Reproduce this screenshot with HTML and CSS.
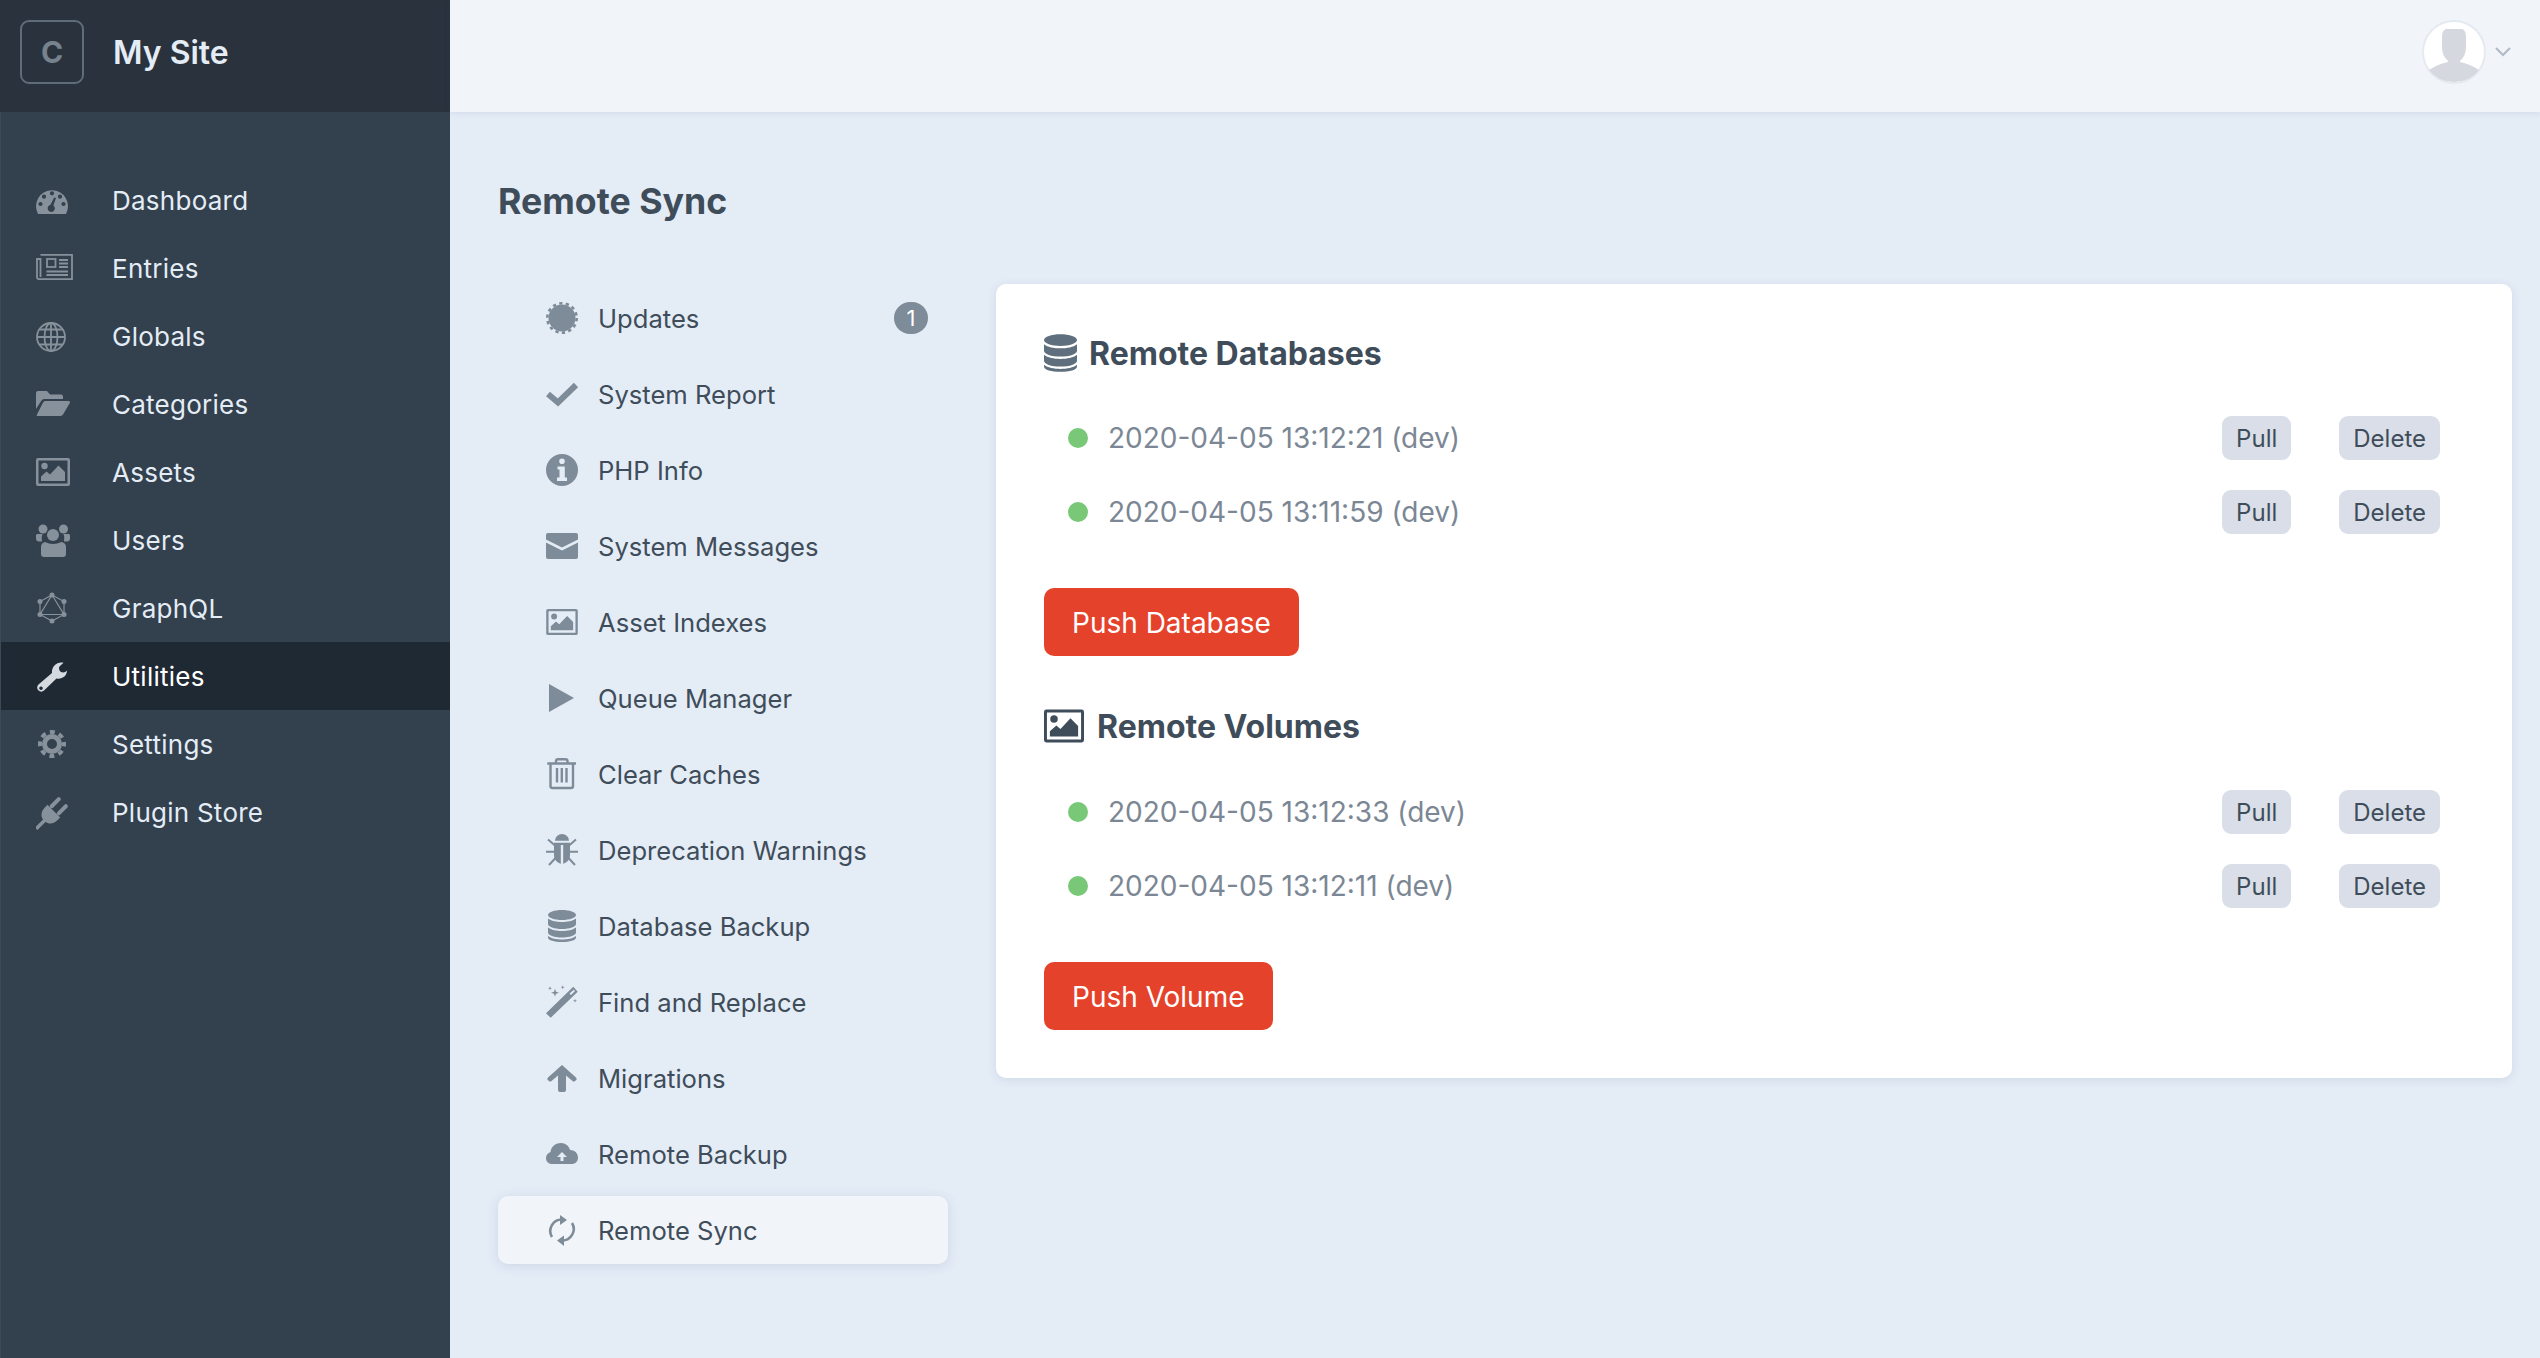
FILE: index.html
```html
<!DOCTYPE html>
<html lang="en">
<head>
  <meta charset="UTF-8" />
  <title>Remote Sync - My Site</title>
  <link rel="stylesheet" href="styles.css">
</head>
<body>
  <svg class="defs" width="0" height="0">
    <symbol id="i-db" viewBox="0 0 28 32">
      <path d="M14 0C21.700 0 28 2.200 28 5S21.700 10 14 10 0 7.800 0 5 6.300 0 14 0Z"/>
      <path d="M0 8.500C3 11 8.500 12 14 12S25 11 28 8.500V14C28 16.800 21.700 19 14 19S0 16.800 0 14Z"/>
      <path d="M0 17.500C3 20 8.500 21 14 21S25 20 28 17.500V22.500C28 25.300 21.700 27.500 14 27.500S0 25.300 0 22.500Z"/>
      <path d="M0 26C3 28.500 8.500 29.500 14 29.500S25 28.500 28 26V27.500C28 30.300 21.700 32 14 32S0 30.300 0 27.500Z"/>
    </symbol>
    <symbol id="i-pic" viewBox="0 0 34 28">
      <path fill-rule="evenodd" d="M2 0H32A2 2 0 0 1 34 2V26A2 2 0 0 1 32 28H2A2 2 0 0 1 0 26V2A2 2 0 0 1 2 0ZM2.500 2.500V25.500H31.500V2.500Z"/>
      <circle cx="8.500" cy="8" r="3.200"/>
      <path d="M5 23V18.500L10.500 13.500 14 16.500 22.500 7.500 29 14V23Z"/>
    </symbol>
  </svg>

  <div class="sidebar">
    <div class="site">
      <div class="site-logo">C</div>
      <div class="site-name">My Site</div>
    </div>
    <ul class="nav">
      <li class="nav-item">
        <svg class="nav-ico" viewBox="0 0 40 40"><path fill-rule="evenodd" d="M2 34A16 16 0 1 1 30 34ZM16 11.200A2.100 2.100 0 1 0 16 15.400 2.100 2.100 0 0 0 16 11.200ZM8 14.600A2.100 2.100 0 1 0 8 18.800 2.100 2.100 0 0 0 8 14.600ZM24 14.600A2.100 2.100 0 1 0 24 18.800 2.100 2.100 0 0 0 24 14.600ZM4.500 21.900A2.100 2.100 0 1 0 4.500 26.100 2.100 2.100 0 0 0 4.500 21.900ZM27.500 21.900A2.100 2.100 0 1 0 27.500 26.100 2.100 2.100 0 0 0 27.500 21.900ZM18.200 17.500L14.500 24.800A3.600 3.600 0 1 0 17.400 25.400L20 18Z"/></svg>
        <span>Dashboard</span>
      </li>
      <li class="nav-item">
        <svg class="nav-ico" viewBox="0 0 40 40"><g class="line" stroke-width="1.800"><path d="M4.500 6.900H36V31.100H3Q1 31.100 1 29V11H4.500V29"/><rect x="11" y="11" width="8.500" height="8"/><path d="M23 12H32M23 15.500H32M23 19H32M10.500 23.500H32M10.500 27H32"/></g></svg>
        <span>Entries</span>
      </li>
      <li class="nav-item">
        <svg class="nav-ico" viewBox="0 0 40 40"><g class="line" stroke-width="1.800"><circle cx="15" cy="21" r="14"/><ellipse cx="15" cy="21" rx="6.500" ry="14"/><path d="M15 7V35M1 21H29M3.500 13.500H26.500M3.500 28.500H26.500"/></g></svg>
        <span>Globals</span>
      </li>
      <li class="nav-item">
        <svg class="nav-ico" viewBox="0 0 40 40"><path d="M0 9Q0 7 2 7H11L14 10.500H25Q27 10.500 27 12.500V15H8Q6.500 15 5.500 16.500L0 25Z"/><path d="M9 17H32Q35 17 33.800 19L27 30.500Q26 32 24 32H2Q0 32 1 30.500L7 18.500Q8 17 9 17Z"/></svg>
        <span>Categories</span>
      </li>
      <li class="nav-item">
        <svg class="nav-ico" viewBox="0 0 40 40"><use href="#i-pic" x="0" y="6" width="34" height="28"/></svg>
        <span>Assets</span>
      </li>
      <li class="nav-item">
        <svg class="nav-ico" viewBox="0 0 40 40"><circle cx="17" cy="15" r="6"/><circle cx="7" cy="9" r="4.500"/><circle cx="27.500" cy="9" r="4.500"/><path d="M1 14H6.500Q5 17 6 21.500H3Q0 21.500 0 18V15Z"/><path d="M33 14H27.500Q29 17 28 21.500H31Q34 21.500 34 18V15Z"/><path d="M9 22Q13 24 17 24T25.500 22Q30 23 30 27V34Q30 37 27 37H8Q5 37 5 34V27Q5 23 9 22Z"/></svg>
        <span>Users</span>
      </li>
      <li class="nav-item">
        <svg class="nav-ico" viewBox="0 0 40 40"><g class="line" stroke-width="1.200"><path d="M16 7L28 13.500V26.500L16 33 4 26.500V13.500ZM16 7L28 26.500H4Z"/></g><circle cx="16" cy="7" r="2.500"/><circle cx="28" cy="13.500" r="2.500"/><circle cx="28" cy="26.500" r="2.500"/><circle cx="16" cy="33" r="2.500"/><circle cx="4" cy="26.500" r="2.500"/><circle cx="4" cy="13.500" r="2.500"/></svg>
        <span>GraphQL</span>
      </li>
      <li class="nav-item active">
        <svg class="nav-ico" viewBox="0 0 40 40"><path fill-rule="evenodd" d="M27.500 6.800C21 5.500 15.500 10.500 16 17L2.500 28.500C.5 30.500 1 33 2.500 34.500 4 36 6.500 36 8 34.500L20.500 22.500C26 23.500 31 20 31 14.500 29.500 16.500 27 17 25 16 22.500 14.500 22.500 10.500 24.500 9.500ZM5 30.500A1.800 1.800 0 1 0 5 34.100 1.800 1.800 0 0 0 5 30.500Z"/></svg>
        <span>Utilities</span>
      </li>
      <li class="nav-item">
        <svg class="nav-ico" viewBox="0 0 40 40"><g class="line"><circle cx="16" cy="20" r="7.500" stroke-width="5"/><circle cx="16" cy="20" r="12" stroke-width="4" stroke-dasharray="5 4.420" stroke-dashoffset="2.500"/></g></svg>
        <span>Settings</span>
      </li>
      <li class="nav-item">
        <svg class="nav-ico" viewBox="0 0 40 40"><g transform="translate(15 22) rotate(45)"><path d="M-9 -4H9V0C9 6 5 9 1.800 9.500V21H-1.800V9.500C-5 9 -9 6 -9 0Z"/><rect x="-7" y="-18" width="4" height="14" rx="2"/><rect x="3" y="-18" width="4" height="14" rx="2"/></g></svg>
        <span>Plugin Store</span>
      </li>
    </ul>
  </div>

  <div class="main">
    <div class="topbar">
      <svg class="avatar" viewBox="0 0 64 64">
        <circle cx="32" cy="32" r="31" fill="#fff" stroke="#e5eaf1" stroke-width="2"/>
        <path fill="#d5d8de" d="M24 9H40Q44 10 44 17V27Q44 36 38 41L38 42Q48 44 57 50 48 62 32 62T7 50Q16 44 26 42L26 41Q20 36 20 27V17Q20 10 24 9Z"/>
      </svg>
      <svg class="chevron" viewBox="0 0 16 10"><path d="M1 1L8 8 15 1"/></svg>
    </div>

    <div class="content">
      <h1 class="page-title">Remote Sync</h1>
      <div class="columns">
        <ul class="subnav">
          <li class="sub-item">
            <svg class="sub-ico" viewBox="0 0 40 40"><circle cx="16" cy="20" r="13.500"/><g class="line"><circle cx="16" cy="20" r="14.700" stroke-width="2.600" stroke-dasharray="3.300 3.300"/></g></svg>
            <span>Updates</span>
            <span class="badge">1</span>
          </li>
          <li class="sub-item">
            <svg class="sub-ico" viewBox="0 0 40 40"><g class="line" stroke-width="6"><path d="M2 20L12 28.500 30 11"/></g></svg>
            <span>System Report</span>
          </li>
          <li class="sub-item">
            <svg class="sub-ico" viewBox="0 0 40 40"><path fill-rule="evenodd" d="M16 4A16 16 0 1 1 16 36 16 16 0 0 1 16 4ZM16 8.500A2.800 2.800 0 1 0 16 14.100 2.800 2.800 0 0 0 16 8.500ZM11.500 16.500V19.500H13.500V27.500H11V31H21V27.500H18.800V16.500Z"/></svg>
            <span>PHP Info</span>
          </li>
          <li class="sub-item">
            <svg class="sub-ico" viewBox="0 0 40 40"><path d="M2 7H30Q32 7 32 9V13.500L16 21.500 0 13.500V9Q0 7 2 7Z"/><path d="M0 16.500L16 24.500 32 16.500V31Q32 33 30 33H2Q0 33 0 31Z"/></svg>
            <span>System Messages</span>
          </li>
          <li class="sub-item">
            <svg class="sub-ico" viewBox="0 0 40 40"><use href="#i-pic" x="0" y="7" width="32" height="26"/></svg>
            <span>Asset Indexes</span>
          </li>
          <li class="sub-item">
            <svg class="sub-ico" viewBox="0 0 40 40"><path d="M3 6L28 20 3 34Z"/></svg>
            <span>Queue Manager</span>
          </li>
          <li class="sub-item">
            <svg class="sub-ico" viewBox="0 0 40 40"><g class="line" stroke-width="2.400"><path d="M1.300 9.500H30M4.500 9.500V32Q4.500 34 6.500 34H25Q27 34 27 32V9.500M10 9.500V7Q10 5.200 12 5.200H19.500Q21.500 5.200 21.500 7V9.500M11 14V28.500M15.800 14V28.500M20.500 14V28.500"/></g></svg>
            <span>Clear Caches</span>
          </li>
          <li class="sub-item">
            <svg class="sub-ico" viewBox="0 0 40 40"><path d="M9 10.700A7 6.700 0 0 1 23 10.700Z"/><path fill-rule="evenodd" d="M8 12.700H24V25C24 30 20 33.500 16 34 12 33.500 8 30 8 25ZM14.800 15V34H17.200V15Z"/><g class="line" stroke-width="2"><path d="M2 9.500L9 15.500M30 9.500L23 15.500M0 21.700H8M32 21.700H24M3 35L9.500 28M29 35L22.500 28"/></g></svg>
            <span>Deprecation Warnings</span>
          </li>
          <li class="sub-item">
            <svg class="sub-ico" viewBox="0 0 40 40"><use href="#i-db" x="2" y="4" width="28" height="32"/></svg>
            <span>Database Backup</span>
          </li>
          <li class="sub-item">
            <svg class="sub-ico" viewBox="0 0 40 40"><path fill-rule="evenodd" d="M0 31.300L27.300 4.700 31.700 9.700 4.700 35.700ZM23.500 11.500L25 13 29 9 27.800 7.700Z"/><path d="M9 6.700L10 9.700 13 10.700 10 11.700 9 14.700 8 11.700 5 10.700 8 9.700Z"/><path d="M4 4.300L4.500 5.800 6 6.300 4.500 6.800 4 8.300 3.500 6.800 2 6.300 3.500 5.800Z"/><path d="M16.700 3.300L17.200 4.800 18.700 5.300 17.200 5.800 16.700 7.300 16.200 5.800 14.700 5.300 16.200 4.800Z"/><path d="M29 16.700L29.500 18.200 31 18.700 29.500 19.200 29 20.700 28.500 19.200 27 18.700 28.500 18.200Z"/></svg>
            <span>Find and Replace</span>
          </li>
          <li class="sub-item">
            <svg class="sub-ico" viewBox="0 0 40 40"><path d="M16 7L30 19.500Q31.500 21 30 22.300L29 23Q28 24 26.500 23L20 17.500V32Q20 34 18 34H14Q12 34 12 32V17.500L5.500 23Q4 24 3 23L2 22.300Q.5 21 2 19.500Z"/></svg>
            <span>Migrations</span>
          </li>
          <li class="sub-item">
            <svg class="sub-ico" viewBox="0 0 40 40"><path fill-rule="evenodd" d="M15 9C19.500 9 23 12 24 16 28.500 16 32 19 32 23.500S28.500 30 26 30H6C2.500 30 0 27.500 0 24 0 21 2 19 4.500 18 5 13 9 9 15 9ZM16 18L11 23H14.500V27H17.500V23H21Z"/></svg>
            <span>Remote Backup</span>
          </li>
          <li class="sub-item active">
            <svg class="sub-ico" viewBox="0 0 40 40"><g class="line" stroke-width="2.600"><path d="M6 27A11.500 11.500 0 0 1 16.500 9.500M26 13A11.500 11.500 0 0 1 15.500 30.500"/></g><path d="M14 5L21 10 14 15Z"/><path d="M18 36L11 30.500 18 25.500Z"/></svg>
            <span>Remote Sync</span>
          </li>
        </ul>

        <div class="card">
          <h2 class="card-head"><svg class="head-db"><use href="#i-db"/></svg>Remote Databases</h2>
          <ul class="rows">
            <li class="row">
              <span class="dot"></span>
              <span class="row-label">2020-04-05 13:12:21 (dev)</span>
              <button class="btn-small btn-pull">Pull</button>
              <button class="btn-small">Delete</button>
            </li>
            <li class="row">
              <span class="dot"></span>
              <span class="row-label">2020-04-05 13:11:59 (dev)</span>
              <button class="btn-small btn-pull">Pull</button>
              <button class="btn-small">Delete</button>
            </li>
          </ul>
          <button class="btn-push">Push Database</button>

          <h2 class="card-head second"><svg class="head-pic"><use href="#i-pic"/></svg>Remote Volumes</h2>
          <ul class="rows">
            <li class="row">
              <span class="dot"></span>
              <span class="row-label">2020-04-05 13:12:33 (dev)</span>
              <button class="btn-small btn-pull">Pull</button>
              <button class="btn-small">Delete</button>
            </li>
            <li class="row">
              <span class="dot"></span>
              <span class="row-label">2020-04-05 13:12:11 (dev)</span>
              <button class="btn-small btn-pull">Pull</button>
              <button class="btn-small">Delete</button>
            </li>
          </ul>
          <button class="btn-push">Push Volume</button>
        </div>
      </div>
    </div>
  </div>
</body>
</html>
```

FILE: styles.css
```css
* {
  box-sizing: border-box;
}
html, body {
  height: 100%;
}
body {
  margin: 0;
  display: flex;
  font-family: Inter, "Liberation Sans", sans-serif;
  background-color: #e4ecf6;
  color: #3f4d5a;
  overflow: hidden;
}
ul {
  list-style: none;
  margin: 0;
  padding: 0;
}
svg {
  fill: currentColor;
  display: block;
  flex: none;
}
.line {
  fill: none;
  stroke: currentColor;
}
.defs {
  position: absolute;
}

/* left sidebar */
.sidebar {
  width: 450px;
  flex: none;
  background-color: #33404d;
  color: #e4ecf6;
  border-left: 1px solid #3d4a57;
}
.site {
  height: 112px;
  margin-left: -1px;
  padding: 0 0 8px 20px;
  display: flex;
  align-items: center;
  gap: 29px;
  background-color: #29323d;
}
.site-logo {
  width: 64px;
  height: 64px;
  border: 2px solid #5f6c79;
  border-radius: 9px;
  display: flex;
  align-items: center;
  justify-content: center;
  color: #76828e;
  font-size: 30px;
  font-weight: 700;
}
.site-name {
  font-size: 32px;
  font-weight: 600;
}
.nav {
  padding-top: 54px;
}
.nav-item {
  height: 68px;
  padding-left: 35px;
  display: flex;
  align-items: center;
  gap: 36px;
  font-size: 26px;
  letter-spacing: 0.25px;
}
.nav-ico {
  width: 40px;
  height: 40px;
  color: #87919b;
}
.nav-item.active {
  background-color: #1f2933;
  color: #fff;
}
.nav-item.active .nav-ico {
  color: #d5dae1;
}

/* main area */
.main {
  flex: 1;
  min-width: 0;
}
.topbar {
  height: 112px;
  padding: 0 29px 8px 0;
  display: flex;
  align-items: center;
  justify-content: flex-end;
  gap: 9px;
  background-color: #f1f5fa;
  box-shadow: 0 1px 6px rgba(60, 90, 130, 0.12);
}
.avatar {
  width: 64px;
  height: 64px;
}
.chevron {
  width: 16px;
  height: 10px;
  fill: none;
  stroke: #b0b9c6;
  stroke-width: 2;
}
.content {
  padding: 66px 28px 0 48px;
}
.page-title {
  margin: 0;
  height: 46px;
  line-height: 46px;
  font-size: 35.700px;
  font-weight: 700;
  color: #3f4d5a;
}
.columns {
  margin-top: 60px;
  display: flex;
  align-items: flex-start;
  gap: 48px;
}

/* utilities menu */
.subnav {
  width: 450px;
  flex: none;
  display: flex;
  flex-direction: column;
  gap: 8px;
}
.sub-item {
  height: 68px;
  padding: 0 20px 0 48px;
  display: flex;
  align-items: center;
  gap: 12px;
  font-size: 25.600px;
  border-radius: 10px;
}
.sub-ico {
  width: 40px;
  height: 40px;
  color: #7e8b99;
}
.sub-item.active {
  background-color: #f1f5fa;
  box-shadow: 0 2px 12px rgba(60, 90, 130, 0.14);
}
.badge {
  margin-left: auto;
  width: 34px;
  height: 32px;
  border-radius: 16px;
  background-color: #7e8b99;
  color: #fff;
  font-size: 22px;
  line-height: 32px;
  text-align: center;
}

/* sync card */
.card {
  flex: 1;
  min-width: 0;
  padding: 48px;
  background-color: #fff;
  border-radius: 10px;
  box-shadow: 0 2px 10px rgba(60, 90, 130, 0.12);
}
.card-head {
  margin: 0;
  height: 42px;
  display: flex;
  align-items: center;
  gap: 12px;
  font-size: 32px;
  font-weight: 700;
  color: #3f4d5a;
}
.card-head.second {
  margin-top: 49px;
  gap: 13px;
}
.card-head.second + .rows {
  margin-top: 43px;
}
.head-db {
  width: 33px;
  height: 38px;
  color: #606f7d;
}
.head-pic {
  width: 40px;
  height: 36px;
  color: #3f4d5a;
}
.rows {
  margin-top: 42px;
  padding: 0 24px 0 24px;
  display: flex;
  flex-direction: column;
  gap: 30px;
}
.row {
  height: 44px;
  display: flex;
  align-items: center;
}
.dot {
  width: 20px;
  height: 20px;
  border-radius: 50%;
  background-color: #78c878;
  margin-right: 20px;
}
.row-label {
  flex: 1;
  font-size: 28px;
  color: #7b8794;
}
.btn-small {
  height: 44px;
  padding: 0 14px;
  border: none;
  border-radius: 9px;
  background-color: #d9dee8;
  color: #3f4d5a;
  font-family: inherit;
  font-size: 24px;
}
.btn-pull {
  margin-right: 48px;
}
.btn-push {
  display: block;
  margin-top: 54px;
  height: 68px;
  padding: 2px 28px 0;
  border: none;
  border-radius: 10px;
  background-color: #e5422b;
  color: #fff;
  font-family: inherit;
  font-size: 28px;
}
```
